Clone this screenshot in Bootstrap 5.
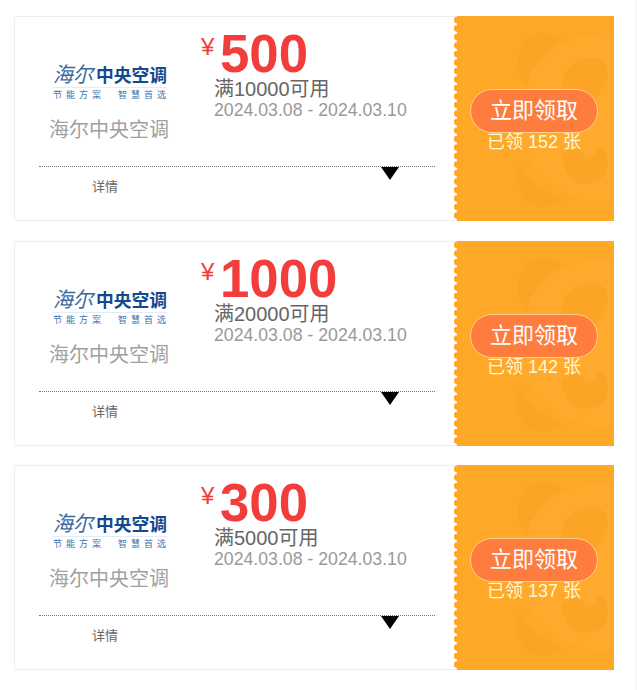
<!DOCTYPE html>
<html lang="zh-CN">
<head>
  <meta charset="UTF-8">
  <meta name="viewport" content="width=device-width, initial-scale=1.0">
  <title>优惠券</title>
  <link href="https://cdn.jsdelivr.net/npm/bootstrap@5.3.0/dist/css/bootstrap.min.css" rel="stylesheet">
  <style>
    body {
      font-family: "Liberation Sans", "Noto Sans CJK SC", sans-serif;
      background: #fff;
      border-right: 2px solid #f6f6f6;
      overflow: hidden;
      height: 690px;
    }
    .coupon-list {
      width: 600px;
      margin-left: 14px;
      padding-top: 16px;
    }
    .coupon-item {
      height: 205px;
      margin-bottom: 19.5px;
    }
    .coupon-info {
      width: 443px;
      border: 1px solid #eee;
      border-right: 0;
      border-radius: 2px 0 0 2px;
    }
    .coupon-top {
      height: 149px;
    }
    .brand-box {
      width: 186px;
      padding-top: 45px;
    }
    .brand-logo {
      display: block;
      width: 120px;
      height: 40px;
      margin-left: 35px;
    }
    .brand-name {
      margin-top: 16px;
      margin-left: 34px;
      font-size: 20px;
      line-height: 24px;
      color: #a0a0a0;
    }
    .price-row {
      height: 48px;
      margin-top: 12px;
      color: #f23d3d;
    }
    .price-unit {
      font-size: 24px;
      line-height: 24px;
      margin-top: 6px;
      width: 19px;
    }
    .price-num {
      font-size: 52.8px;
      font-weight: 700;
      line-height: 50px;
    }
    .price-limit {
      margin-left: 13px;
      margin-top: 2px;
      font-size: 20px;
      line-height: 20px;
      color: #666;
      white-space: nowrap;
    }
    .price-date {
      margin-left: 13px;
      margin-top: 1px;
      font-size: 17.7px;
      line-height: 20px;
      color: #999;
      white-space: nowrap;
    }
    .coupon-more {
      margin: 0 22px 0 24px;
      border-top: 1px dotted #777;
      height: 54px;
    }
    .more-text {
      padding: 11px 0 0 53px;
      font-size: 13px;
      line-height: 18px;
      color: #666;
    }
    .more-arrow {
      position: absolute;
      top: 0;
      right: 36px;
      width: 0;
      height: 0;
      border-left: 9px solid transparent;
      border-right: 9px solid transparent;
      border-top: 13px solid #000;
    }
    .coupon-side {
      width: 157px;
      background: #ffa726;
    }
    /* 左边的锯齿 */
    .coupon-side::before {
      content: "";
      position: absolute;
      top: 0;
      bottom: 0;
      left: -3px;
      width: 3px;
      background: radial-gradient(circle at 100% 4px, #ffa726 3px, transparent 3.6px) 0 0 / 3px 8.5px repeat-y;
    }
    .side-bg {
      position: absolute;
      top: 0;
      left: -1px;
      width: 158px;
      height: 205px;
    }
    .side-body {
      position: relative;
      padding-top: 73px;
    }
    .get-btn {
      width: 128px;
      height: 44px;
      margin-left: 13px;
      padding: 0;
      border: 1px solid #ffd08a;
      border-radius: 22px;
      background: #ff7c3f;
      color: #fff;
      font-size: 22px;
      line-height: 42px;
    }
    .get-count {
      margin-top: -1px;
      margin-left: -3px;
      font-size: 18px;
      line-height: 20px;
      color: #fff8d8;
      text-align: center;
      white-space: nowrap;
    }
    .logo-main {
      font-size: 18px;
      font-weight: 700;
      fill: #114a8e;
    }
    .logo-script {
      font-size: 21px;
      font-style: italic;
      fill: #3a6a9c;
    }
    .logo-sub {
      font-size: 9px;
      fill: #3a74ad;
    }
  </style>
</head>
<body>
  <div class="coupon-list" id="couponList"></div>

  <script>
    // 优惠券数据
    const coupons = [
      { price: 500, limit: '满10000可用', count: 152 },
      { price: 1000, limit: '满20000可用', count: 142 },
      { price: 300, limit: '满5000可用', count: 137 }
    ];

    const couponList = document.getElementById('couponList');

    coupons.forEach(coupon => {
      const item = document.createElement('div');
      item.className = 'coupon-item d-flex';
      item.innerHTML = `
        <div class="coupon-info">
          <div class="coupon-top d-flex">
            <div class="brand-box">
              <svg class="brand-logo" viewBox="0 0 120 40">
                <text class="logo-script" x="3" y="20" textLength="40" lengthAdjust="spacingAndGlyphs">海尔</text>
                <text class="logo-main" x="46" y="20" textLength="71" lengthAdjust="spacingAndGlyphs">中央空调</text>
                <line x1="3" y1="25.5" x2="117" y2="25.5" stroke="#e3ebf3" />
                <text class="logo-sub" x="3" y="36" textLength="48">节能方案</text>
                <text class="logo-sub" x="68" y="36" textLength="48">智慧首选</text>
              </svg>
              <div class="brand-name">海尔中央空调</div>
            </div>
            <div>
              <div class="price-row d-flex">
                <div class="price-unit">¥</div>
                <div class="price-num">${coupon.price}</div>
              </div>
              <div class="price-limit">${coupon.limit}</div>
              <div class="price-date">2024.03.08 - 2024.03.10</div>
            </div>
          </div>
          <div class="coupon-more position-relative">
            <div class="more-arrow"></div>
            <div class="more-text">详情</div>
          </div>
        </div>
        <div class="coupon-side position-relative">
          <svg class="side-bg" viewBox="0 0 158 205">
            <circle cx="146" cy="102" r="84" fill="#ffaa2c" />
            <path d="M106 25 C98 16 80 14 70 24 C58 36 60 56 72 72 C72 56 84 38 106 25 Z" fill="#fba425" />
            <path d="M106 182 C98 192 80 194 70 184 C58 172 60 152 64 146 C68 162 84 174 106 182 Z" fill="#fba425" />
            <path d="M106 68 C108 50 122 42 136 42 C148 42 154 52 151 62 C148 72 142 76 140 84 C134 76 118 72 106 76 Z" fill="#fba425" />
            <path d="M106 138 C116 132 122 132 128 138 C132 146 140 142 140 132 C146 130 152 136 152 148 C152 160 142 168 128 168 C116 168 106 154 106 138 Z" fill="#fba425" />
          </svg>
          <div class="side-body">
            <button type="button" class="btn get-btn d-block">立即领取</button>
            <div class="get-count">已领 ${coupon.count} 张</div>
          </div>
        </div>
      `;
      couponList.appendChild(item);
    });
  </script>
  <script src="https://cdn.jsdelivr.net/npm/bootstrap@5.3.0/dist/js/bootstrap.bundle.min.js"></script>
</body>
</html>
